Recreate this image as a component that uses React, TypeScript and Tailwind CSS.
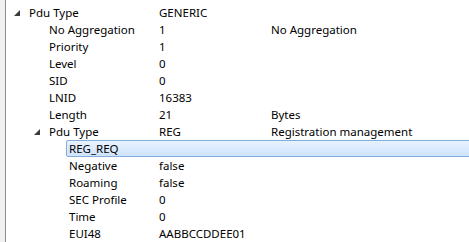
import React from 'react';

type Row = {
  level: number;
  label: string;
  value?: string;
  desc?: string;
  expanded?: boolean;
  selected?: boolean;
};

const rows: Row[] = [
  { level: 0, label: 'Pdu Type', value: 'GENERIC', expanded: true },
  { level: 1, label: 'No Aggregation', value: '1', desc: 'No Aggregation' },
  { level: 1, label: 'Priority', value: '1' },
  { level: 1, label: 'Level', value: '0' },
  { level: 1, label: 'SID', value: '0' },
  { level: 1, label: 'LNID', value: '16383' },
  { level: 1, label: 'Length', value: '21', desc: 'Bytes' },
  { level: 1, label: 'Pdu Type', value: 'REG', desc: 'Registration management', expanded: true },
  { level: 2, label: 'REG_REQ', selected: true },
  { level: 2, label: 'Negative', value: 'false' },
  { level: 2, label: 'Roaming', value: 'false' },
  { level: 2, label: 'SEC Profile', value: '0' },
  { level: 2, label: 'Time', value: '0' },
  { level: 2, label: 'EUI48', value: 'AABBCCDDEE01' },
];

function Expander() {
  return (
    <svg width="6" height="6" viewBox="0 0 6 6" className="shrink-0">
      <polygon points="6,0 6,6 0,6" fill="#3c3c3c" />
    </svg>
  );
}

export default function App() {
  return (
    <div
      className="flex w-[469px] h-[242px] overflow-hidden bg-white text-[11.5px] text-black"
      style={{ fontFamily: '"Noto Sans", "Open Sans", sans-serif' }}
    >
      <div className="w-[6px] bg-[#f0f0f0] border-r border-[#8a8f96] shrink-0" />
      <div className="flex-1 pt-[4px] leading-[17px]">
        {rows.map((r, i) => {
          const textX = 23 + r.level * 20;
          if (r.selected) {
            return (
              <div key={i} className="flex h-[17px]">
                <div style={{ width: textX - 3 }} className="shrink-0" />
                <div className="flex-1 -mr-[4px] h-[17px] rounded-[2px] border border-[#84acdd] bg-gradient-to-b from-[#e8f2fe] to-[#cfe3fc] pl-[2px] leading-[15px]">
                  {r.label}
                </div>
              </div>
            );
          }
          return (
            <div key={i} className="flex h-[17px] items-center whitespace-nowrap">
              <div className="flex items-center w-[153px] shrink-0">
                <div style={{ width: textX }} className="flex justify-end pr-[9px] shrink-0">
                  {r.expanded && <Expander />}
                </div>
                <span>{r.label}</span>
              </div>
              <div className="w-[112px] shrink-0">{r.value}</div>
              <div>{r.desc}</div>
            </div>
          );
        })}
      </div>
    </div>
  );
}
